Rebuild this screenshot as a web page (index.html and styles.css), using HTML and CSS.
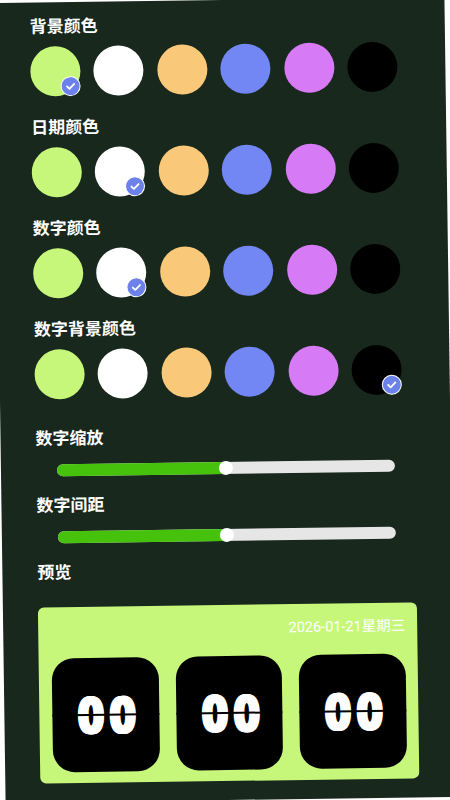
FILE: index.html
```html
<!DOCTYPE html>
<html lang="zh">
<head>
<meta charset="utf-8">
<link rel="stylesheet" href="styles.css">
</head>
<body>
<div class="screen">
  <section class="group">
    <h2 class="title">背景颜色</h2>
    <div class="swatches">
      <div class="sw green"><span class="check"><svg viewBox="0 0 20 20"><path d="M6 10.3l2.7 2.6L14 7.6"/></svg></span></div>
      <div class="sw white"></div>
      <div class="sw orange"></div>
      <div class="sw blue"></div>
      <div class="sw purple"></div>
      <div class="sw black"></div>
    </div>
  </section>
  <section class="group">
    <h2 class="title">日期颜色</h2>
    <div class="swatches">
      <div class="sw green"></div>
      <div class="sw white"><span class="check"><svg viewBox="0 0 20 20"><path d="M6 10.3l2.7 2.6L14 7.6"/></svg></span></div>
      <div class="sw orange"></div>
      <div class="sw blue"></div>
      <div class="sw purple"></div>
      <div class="sw black"></div>
    </div>
  </section>
  <section class="group">
    <h2 class="title">数字颜色</h2>
    <div class="swatches">
      <div class="sw green"></div>
      <div class="sw white"><span class="check"><svg viewBox="0 0 20 20"><path d="M6 10.3l2.7 2.6L14 7.6"/></svg></span></div>
      <div class="sw orange"></div>
      <div class="sw blue"></div>
      <div class="sw purple"></div>
      <div class="sw black"></div>
    </div>
  </section>
  <section class="group last">
    <h2 class="title">数字背景颜色</h2>
    <div class="swatches">
      <div class="sw green"></div>
      <div class="sw white"></div>
      <div class="sw orange"></div>
      <div class="sw blue"></div>
      <div class="sw purple"></div>
      <div class="sw black"><span class="check"><svg viewBox="0 0 20 20"><path d="M6 10.3l2.7 2.6L14 7.6"/></svg></span></div>
    </div>
  </section>
  <section class="slider-group">
    <h2 class="title">数字缩放</h2>
    <div class="slider">
      <div class="track"><div class="fill" style="width:50%"></div><div class="thumb" style="left:50%"></div></div>
    </div>
  </section>
  <section class="slider-group">
    <h2 class="title">数字间距</h2>
    <div class="slider">
      <div class="track"><div class="fill" style="width:50%"></div><div class="thumb" style="left:50%"></div></div>
    </div>
  </section>
  <h2 class="title">预览</h2>
  <div class="card">
    <div class="date">2026-01-21星期三</div>
    <div class="tiles">
      <div class="tile"><span class="digits">00</span><span class="split"></span></div>
      <div class="tile"><span class="digits">00</span><span class="split"></span></div>
      <div class="tile"><span class="digits">00</span><span class="split"></span></div>
    </div>
  </div>
</div>
</body>
</html>
```
FILE: styles.css
```css
html, body {
  margin: 0;
  padding: 0;
  background: #ffffff;
  overflow: hidden;
}
.screen {
  width: 450px;
  height: 800px;
  box-sizing: border-box;
  padding: 12px 0 0 35px;
  background: #18281d;
  transform: rotate(-0.8deg);
  transform-origin: 50% 50%;
  font-family: "Noto Sans CJK SC", "Noto Sans", sans-serif;
  color: #ffffff;
}
.title {
  margin: 0;
  font-size: 17px;
  line-height: 22px;
  font-weight: 700;
  color: #ffffff;
}
.group {
  margin-bottom: 19px;
}
.group.last {
  margin-bottom: 27px;
}
.swatches {
  display: flex;
  gap: 13.4px;
  margin-top: 10px;
}
.sw {
  position: relative;
  width: 50px;
  height: 50px;
  border-radius: 50%;
}
.green { background: #c7f77a; }
.white { background: #ffffff; }
.orange { background: #f9c879; }
.blue { background: #7287f4; }
.purple { background: #d77af6; }
.black { background: #000000; }
.check {
  position: absolute;
  right: 0;
  bottom: 0;
  width: 20px;
  height: 20px;
  box-sizing: border-box;
  border-radius: 50%;
  background: #6c82ea;
  border: 1.5px solid #ffffff;
  display: flex;
  align-items: center;
  justify-content: center;
}
.check svg {
  width: 18px;
  height: 18px;
  fill: none;
  stroke: #ffffff;
  stroke-width: 2;
  stroke-linecap: round;
  stroke-linejoin: round;
}
.slider-group {
  margin-bottom: 11.5px;
}
.slider {
  height: 24px;
  margin-top: 9.5px;
  display: flex;
  align-items: center;
  padding-left: 21px;
}
.track {
  position: relative;
  width: 338px;
  height: 12px;
  border-radius: 6px;
  background: #e6e6e6;
}
.fill {
  height: 100%;
  border-radius: 6px 0 0 6px;
  background: #46c10c;
}
.thumb {
  position: absolute;
  top: 50%;
  width: 14px;
  height: 14px;
  border-radius: 50%;
  background: #ffffff;
  transform: translate(-50%, -50%);
}
.card {
  width: 379px;
  height: 176px;
  box-sizing: border-box;
  margin-top: 24.5px;
  padding: 14px 12px 10.5px 13px;
  border-radius: 6px;
  background: #c7f77a;
}
.date {
  text-align: right;
  font-family: Roboto, "Noto Sans CJK SC", sans-serif;
  font-size: 14.5px;
  line-height: 20px;
  color: #ffffff;
}
.tiles {
  display: flex;
  gap: 17px;
  margin-top: 17.5px;
}
.tile {
  position: relative;
  width: 107px;
  height: 114px;
  border-radius: 22px;
  background: #000000;
  display: flex;
  align-items: center;
  justify-content: center;
}
.digits {
  font-family: Inter, "Liberation Sans", sans-serif;
  font-weight: 900;
  font-size: 51px;
  line-height: 1;
  letter-spacing: 9px;
  margin-right: -9px;
  font-feature-settings: "tnum" 1;
  color: #ffffff;
  text-shadow: 2px 0 #ffffff, -2px 0 #ffffff, 1px 0 #ffffff, -1px 0 #ffffff;
  transform: scaleX(0.76);
}
.split {
  position: absolute;
  left: 0;
  right: 0;
  top: 50%;
  height: 2px;
  margin-top: -1px;
  background: #000000;
}
```
